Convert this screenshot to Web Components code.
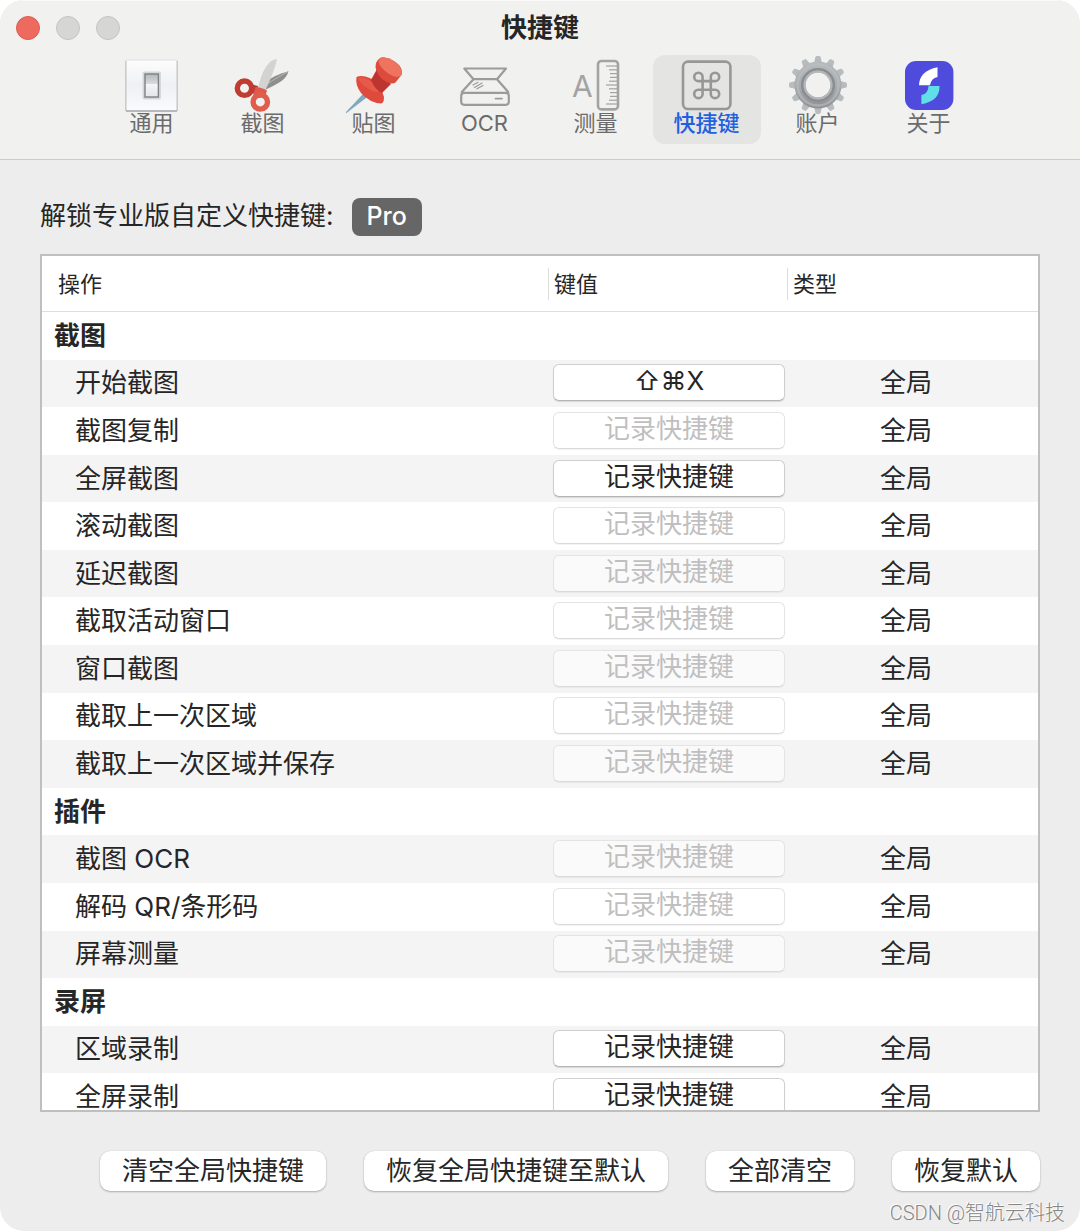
<!DOCTYPE html>
<html lang="zh-CN">
<head>
<meta charset="utf-8">
<meta name="viewport" content="width=device-width, initial-scale=1">
<title>快捷键</title>
<style>
* {
  margin: 0;
  padding: 0;
  box-sizing: border-box;
}

body {
  --text: #262626;
  --text-muted: #6b6b6b;
  --accent: #2160e0;
  --bg-header: #f1f1f0;
  --bg: #ededed;
  --line: #bfbfbf;

  background: #fff;
  color: var(--text);
  font-family: Inter, "Noto Sans CJK SC", sans-serif;
  font-size: 26px;
  line-height: 32px;
}
</style>
</head>
<body>

<prefs-window heading="快捷键">
  <tool-tab slot="tabs" icon="switch">通用</tool-tab>
  <tool-tab slot="tabs" icon="scissors">截图</tool-tab>
  <tool-tab slot="tabs" icon="pin">贴图</tool-tab>
  <tool-tab slot="tabs" icon="scanner">OCR</tool-tab>
  <tool-tab slot="tabs" icon="ruler">测量</tool-tab>
  <tool-tab slot="tabs" icon="command" active>快捷键</tool-tab>
  <tool-tab slot="tabs" icon="gear">账户</tool-tab>
  <tool-tab slot="tabs" icon="app">关于</tool-tab>

  <pro-banner>解锁专业版自定义快捷键:</pro-banner>
  <shortcut-table></shortcut-table>

  <push-button slot="actions">清空全局快捷键</push-button>
  <push-button slot="actions">恢复全局快捷键至默认</push-button>
  <push-button slot="actions">全部清空</push-button>
  <push-button slot="actions">恢复默认</push-button>

  <span slot="credit">CSDN @智航云科技</span>
</prefs-window>

<script>
const RESET = `
* {
  margin: 0;
  padding: 0;
  box-sizing: border-box;
}
button {
  font: inherit;
  color: inherit;
  border: 0;
  background: none;
}
`;

// [name, shortcut, enabled]; a plain string starts a new group
const SHORTCUTS = [
  "截图",
  ["开始截图", "⇧⌘X", true],
  ["截图复制", "", false],
  ["全屏截图", "", true],
  ["滚动截图", "", false],
  ["延迟截图", "", false],
  ["截取活动窗口", "", false],
  ["窗口截图", "", false],
  ["截取上一次区域", "", false],
  ["截取上一次区域并保存", "", false],
  "插件",
  ["截图 OCR", "", false],
  ["解码 QR/条形码", "", false],
  ["屏幕测量", "", false],
  "录屏",
  ["区域录制", "", true],
  ["全屏录制", "", true],
];

function gearTeeth() {
  let teeth = "";
  for (let i = 0; i < 12; i++) {
    teeth += `<path d="M24 10 Q26.3 8.5 26.8 5 L27.2 2.4 Q27.5 1 29 1 H31 Q32.5 1 32.8 2.4 L33.2 5 Q33.7 8.5 36 10 Z" transform="rotate(${i * 30} 30 30)"/>`;
  }
  return teeth;
}

function rulerTicks() {
  let ticks = "";
  for (let i = 0; i < 11; i++) {
    const start = i % 5 === 0 ? 40 : i % 5 === 2 || i % 5 === 3 ? 44 : 43;
    ticks += `<path d="M${start} ${11 + i * 3.8} H51"/>`;
  }
  return ticks;
}

const ICONS = {
  switch: `
    <defs>
      <linearGradient id="plate" x2="0" y2="1"><stop stop-color="#fdfdfd"/><stop offset=".5" stop-color="#eef0f3"/><stop offset="1" stop-color="#fafbfc"/></linearGradient>
      <linearGradient id="rocker" x2="0" y2="1"><stop stop-color="#b4b8ba"/><stop offset=".42" stop-color="#d9dbdc"/><stop offset=".45" stop-color="#f4f5f6"/><stop offset="1" stop-color="#e3e5e8"/></linearGradient>
    </defs>
    <rect x="4" y="5" width="51" height="51" rx="1" fill="url(#plate)" stroke="#dcdee0"/>
    <path d="M4 56 H55" stroke="#a4a7aa" stroke-width="1.4"/>
    <path d="M3.8 6 V56 M55.2 6 V56" stroke="#b3b5b7" stroke-width=".8"/>
    <rect x="20.5" y="16.5" width="18.5" height="28" rx="2" fill="#d5d7da"/>
    <rect x="23" y="19" width="13.4" height="23" fill="url(#rocker)" stroke="#7d8285" stroke-width="1.4"/>`,
  scissors: `
    <path d="M30.5 35.5 L34 26 Q42 20 55.5 16.3 Q54 22 48.5 26 Q42 30.5 30.5 35.5Z" fill="#8f8f8f"/>
    <path d="M34 29 Q44 22.5 55 16.6" stroke="#b4b4b4" fill="none"/>
    <path d="M17 29 L25 31 L23 39 L17 38Z" fill="#b93a30"/>
    <circle cx="11.5" cy="33.2" r="7.2" fill="none" stroke="#c03c32" stroke-width="5.4"/>
    <path d="M25 33 Q29 14 37.5 6.5 Q41 4 44 4.2 Q42 15 31.5 37Z" fill="#d3d3d1"/>
    <path d="M22.5 32 Q28 32 34 35.5 L32 42 L20 44 Q20 38 22.5 32Z" fill="#e0574b"/>
    <circle cx="27.3" cy="46.9" r="7.2" fill="none" stroke="#e05d4e" stroke-width="5.4"/>`,
  pin: `
    <path d="M18.5 39.5 L22 43 L2.5 58 Q1.5 58.5 2 57Z" fill="#7fa9c0"/>
    <path d="M18.5 39.5 L20.5 38 L23 41 L22 43Z" fill="#426d86"/>
    <path d="M12.5 22 Q18 19 28 24 Q37 31 40 42 Q40 48 37 48.5 Q26 48 17 38 Q11 30 12.5 22Z" fill="#e04a3c"/>
    <path d="M14 23 Q20 21 28 27 L36 36 Q32 39 25 34 Q17 30 14 23Z" fill="#e65a4a"/>
    <path d="M33 14 L47 29 L38 38 Q31 35 27 25Z" fill="#bd352e"/>
    <path d="M32 8 Q35 2 39.5 2.3 Q49 4 55 10 Q59 15 57.5 20 L51 28 Q44 30 37 23 Q30 15 32 8Z" fill="#dc4b3d"/>
    <path d="M34.5 6.5 Q36 2.3 40 2.5 Q49 4 55 10.5 Q59 16 57 20.5 Q53 24 45 19 Q36 13 34.5 6.5Z" fill="#ee7460"/>`,
  scanner: `
    <g fill="none" stroke="#9b9b9b" stroke-width="2.2" stroke-linejoin="round" stroke-linecap="round">
      <path d="M9.3 13.5 H51 L42 24.2 H18.5 Z"/>
      <path d="M18.5 24.2 L6.8 37 M42 24.2 L53.2 37"/>
      <rect x="6.2" y="37.8" width="47.6" height="12" rx="3"/>
      <path d="M40.5 43.6 H47" stroke-width="1.8"/>
      <path d="M18 30 L23 27.3 M19.5 32.5 L27 28 M22 33.8 L28 30.5" stroke-width="1.2"/>
    </g>`,
  ruler: `
    <text x="6" y="42" font-size="30" font-weight="400" fill="#a3a3a3">A</text>
    <g fill="none" stroke="#a3a3a3">
      <rect x="32" y="6" width="20" height="48.4" rx="3.5" stroke-width="2.6"/>
      <g stroke-width="1.2">${rulerTicks()}</g>
    </g>`,
  command: `
    <g fill="none" stroke="#979796" stroke-width="2.6">
      <rect x="6" y="6.6" width="47.4" height="47.4" rx="5"/>
      <path d="M25.6 21.9 V38.9 A4.2 4.2 0 1 1 21.4 34.7 H38 A4.2 4.2 0 1 1 33.8 38.9 V21.9 A4.2 4.2 0 1 1 38 26.1 H21.4 A4.2 4.2 0 1 1 25.6 21.9Z"/>
    </g>`,
  gear: `
    <defs><linearGradient id="metal" x2="0" y2="60" gradientUnits="userSpaceOnUse"><stop stop-color="#b9bec0"/><stop offset=".5" stop-color="#a9adaf"/><stop offset="1" stop-color="#85888a"/></linearGradient></defs>
    <g fill="url(#metal)">${gearTeeth()}</g>
    <circle cx="30" cy="30" r="18" fill="none" stroke="url(#metal)" stroke-width="11"/>
    <circle cx="30" cy="30" r="20.5" fill="none" stroke="#bcc0c2" stroke-width="2.4" opacity=".6"/>
    <circle cx="30" cy="30" r="15.8" fill="none" stroke="#8a8e90" stroke-width="2.6"/>
    <circle cx="30" cy="30" r="13.4" fill="none" stroke="#b4b7b9" stroke-width="2"/>`,
  app: `
    <rect x="6" y="6" width="48.4" height="49" rx="11" fill="#4f4bdd"/>
    <path d="M38.5 12.3 V22 Q32 23.5 31 30.2 H20 Q20.5 16 38.5 12.3Z" fill="#fff"/>
    <path d="M29.5 31 H40.5 Q41 46 22.4 49.2 V40 Q29.5 38.5 29.5 31Z" fill="#60dfe8"/>`,
};

class PrefsWindow extends HTMLElement {
  constructor() {
    super();
    this.attachShadow({ mode: "open" });
    this.shadowRoot.innerHTML = `
<style>
${RESET}
:host {
  position: relative;
  display: flex;
  flex-direction: column;
  height: 100vh;
  min-height: 480px;
  background: var(--bg);
  border-radius: 24px;
  overflow: hidden;
}

header {
  background: var(--bg-header);
  border-top: 1px solid #fafafa;
  border-bottom: 1px solid #cbcbcb;
  padding-bottom: 15px;
}

.titlebar {
  display: grid;
  grid-template-columns: 1fr auto 1fr;
  align-items: center;
  height: 54px;
  padding: 0 16px;
}

.lights {
  display: flex;
  gap: 16px;
}

.lights button {
  width: 24px;
  height: 24px;
  border-radius: 50%;
  background: #d6d6d4;
  border: 1px solid #c3c3c1;
}

.lights .close {
  background: #ed6a5f;
  border-color: #dc5c52;
}

h1 {
  font-size: 26px;
  font-weight: 700;
}

nav {
  display: flex;
  justify-content: center;
  gap: 3px;
}

main {
  flex: 1;
  display: flex;
  flex-direction: column;
  gap: 18px;
  min-height: 0;
  padding: 38px 40px 0;
}

footer {
  display: flex;
  justify-content: flex-end;
  gap: 38px;
  padding: 39px 40px 40px;
}

.credit {
  position: absolute;
  right: 15px;
  bottom: 5px;
  font-family: Roboto, "Noto Sans CJK SC", sans-serif;
  font-weight: 300;
  font-size: 20px;
  line-height: 26px;
  color: #868686;
  text-shadow: -1px -1px 0 #fff;
}
</style>
<header>
  <div class="titlebar">
    <div class="lights">
      <button class="close" aria-label="关闭"></button>
      <button aria-label="最小化"></button>
      <button aria-label="缩放"></button>
    </div>
    <h1></h1>
  </div>
  <nav><slot name="tabs"></slot></nav>
</header>
<main><slot></slot></main>
<footer><slot name="actions"></slot></footer>
<div class="credit"><slot name="credit"></slot></div>
`;
  }

  connectedCallback() {
    this.shadowRoot.querySelector("h1").textContent = this.getAttribute("heading");
  }
}

class ToolTab extends HTMLElement {
  constructor() {
    super();
    this.attachShadow({ mode: "open" });
    this.shadowRoot.innerHTML = `
<style>
${RESET}
:host {
  display: block;
  width: 108px;
}

button {
  display: flex;
  flex-direction: column;
  align-items: center;
  width: 100%;
  height: 89px;
  border-radius: 12px;
  color: var(--text-muted);
  font-size: 22px;
  line-height: 26px;
}

svg {
  flex: none;
  width: 60px;
  height: 60px;
  margin-bottom: -5px;
}

:host([active]) button {
  background: #e4e4e2;
  color: var(--accent);
  font-weight: 500;
}
</style>
<button>
  <svg viewBox="0 0 60 60" aria-hidden="true"></svg>
  <span><slot></slot></span>
</button>
`;
  }

  connectedCallback() {
    this.shadowRoot.querySelector("svg").innerHTML = ICONS[this.getAttribute("icon")];
  }
}

class ProBanner extends HTMLElement {
  constructor() {
    super();
    this.attachShadow({ mode: "open" });
    this.shadowRoot.innerHTML = `
<style>
${RESET}
:host {
  display: flex;
  align-items: center;
  gap: 18px;
}

p {
  padding-bottom: 2px;
}

button {
  height: 38px;
  padding: 0 15px 3px;
  border-radius: 8px;
  background: #666;
  color: #fff;
  font-size: 25px;
  font-weight: 500;
}
</style>
<p><slot></slot></p>
<button>Pro</button>
`;
  }
}

class KeyRecorder extends HTMLElement {
  constructor() {
    super();
    this.attachShadow({ mode: "open" });
    this.shadowRoot.innerHTML = `
<style>
${RESET}
:host {
  display: block;
}

button {
  display: block;
  width: 100%;
  height: 37px;
  padding-bottom: 4px;
  border: 1px solid #cfcfcf;
  border-bottom-color: #b5b5b5;
  border-radius: 6px;
  background: #fff;
  box-shadow: 0 1px 1px rgba(0, 0, 0, 0.12);
}

button:disabled {
  background: rgba(255, 255, 255, 0.5);
  border-color: #e4e4e4;
  border-bottom-color: #dadada;
  box-shadow: 0 1px 1px rgba(0, 0, 0, 0.05);
  color: #bfbfbf;
}
</style>
<button></button>
`;
  }

  connectedCallback() {
    const button = this.shadowRoot.querySelector("button");
    button.textContent = this.getAttribute("keys") || "记录快捷键";
    button.disabled = this.hasAttribute("disabled");
  }
}

class ShortcutTable extends HTMLElement {
  constructor() {
    super();
    this.attachShadow({ mode: "open" });
    this.shadowRoot.innerHTML = `
<style>
${RESET}
:host {
  display: block;
  flex: 1;
  min-height: 0;
  border: 2px solid var(--line);
  background: #fff;
  overflow: auto;
  scrollbar-width: none;
}

table {
  width: 100%;
  table-layout: fixed;
  border-spacing: 0;
}

.key {
  width: 239px;
}

.type {
  width: 251px;
}

thead th {
  height: 56px;
  border-bottom: 1px solid #dedede;
  font-size: 22px;
  font-weight: 400;
  text-align: left;
}

thead span {
  display: block;
  padding-left: 16px;
}

thead .key span,
thead .type span {
  padding-left: 5px;
  border-left: 1px solid #dcdcdc;
}

/* the rows share this height evenly */
tbody {
  height: 809px;
}

tbody th,
tbody td {
  line-height: 46px;
  text-align: left;
  font-weight: 400;
}

tbody tr:nth-child(even) {
  background: #f4f4f4;
}

.group th {
  padding-left: 12px;
  font-weight: 700;
}

.name {
  padding-left: 33px;
}

tbody .key {
  padding: 0 2px 1px 5px;
  line-height: 32px;
}

tbody .type {
  padding-right: 13px;
  text-align: center;
}
</style>
<table>
  <thead>
    <tr>
      <th scope="col"><span>操作</span></th>
      <th scope="col" class="key"><span>键值</span></th>
      <th scope="col" class="type"><span>类型</span></th>
    </tr>
  </thead>
  <tbody></tbody>
</table>
`;
  }

  connectedCallback() {
    this.shadowRoot.querySelector("tbody").innerHTML = SHORTCUTS.map((item) => {
      if (typeof item === "string") {
        return `<tr class="group"><th scope="rowgroup" colspan="3">${item}</th></tr>`;
      }
      const [name, keys, enabled] = item;
      return `<tr>
        <th scope="row" class="name">${name}</th>
        <td class="key"><key-recorder keys="${keys}" ${enabled ? "" : "disabled"}></key-recorder></td>
        <td class="type">全局</td>
      </tr>`;
    }).join("");
  }
}

class PushButton extends HTMLElement {
  constructor() {
    super();
    this.attachShadow({ mode: "open" });
    this.shadowRoot.innerHTML = `
<style>
${RESET}
:host {
  display: block;
}

button {
  height: 40px;
  padding: 0 22px 1px;
  border-radius: 10px;
  background: #fff;
  box-shadow: 0 0 1px rgba(0, 0, 0, 0.2), 0 1px 2px rgba(0, 0, 0, 0.25);
  white-space: nowrap;
}
</style>
<button><slot></slot></button>
`;
  }
}

customElements.define("key-recorder", KeyRecorder);
customElements.define("shortcut-table", ShortcutTable);
customElements.define("push-button", PushButton);
customElements.define("pro-banner", ProBanner);
customElements.define("tool-tab", ToolTab);
customElements.define("prefs-window", PrefsWindow);
</script>
</body>
</html>
